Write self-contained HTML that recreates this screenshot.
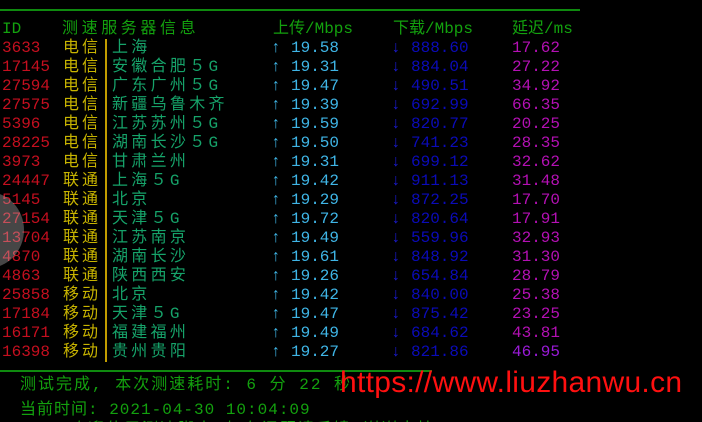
<!DOCTYPE html>
<html><head><meta charset="utf-8"><style>
html,body{margin:0;padding:0;background:#000;width:702px;height:422px;overflow:hidden;position:relative}
body{font-family:"Liberation Mono","Noto Sans CJK SC",monospace;font-size:16px}
.r{position:absolute;left:0;height:19px;line-height:19px;white-space:pre;width:702px}
.r span{position:absolute;top:0}
.id{left:2px;color:#c50f1f}
.ca{left:63px;color:#c8b400;letter-spacing:3px}
.bar{left:105px;top:0!important;width:2px;height:19px;background:#c19c00}
.ci{left:112px;color:#16a36a;letter-spacing:3.3px}
.ua{left:271px;color:#3fb5e6}
.uv{left:291px;color:#3fb5e6}
.da{left:391px;color:#1a1ad0}
.dv{left:411px;color:#0b0bb8}
.lt{left:512px;color:#b410b4}
.h{color:#13a10e}
.line{position:absolute;height:2px;background:#0f8a0f;left:0}
</style></head><body>
<div class="line" style="top:9px;width:580px"></div>
<div class="r" style="top:20px"><span class="h" style="left:2px">ID</span><span class="h" style="left:62px;letter-spacing:3.6px">测速服务器信息</span><span class="h" style="left:273px">上传/Mbps</span><span class="h" style="left:393px">下载/Mbps</span><span class="h" style="left:512px">延迟/ms</span></div>
<div class="r" style="top:39px"><span class="id">3633</span><span class="ca">电信</span><span class="bar"></span><span class="ci">上海</span><span class="ua">↑</span><span class="uv">19.58</span><span class="da">↓</span><span class="dv">888.60</span><span class="lt">17.62</span></div>
<div class="r" style="top:58px"><span class="id">17145</span><span class="ca">电信</span><span class="bar"></span><span class="ci">安徽合肥５G</span><span class="ua">↑</span><span class="uv">19.31</span><span class="da">↓</span><span class="dv">884.04</span><span class="lt">27.22</span></div>
<div class="r" style="top:77px"><span class="id">27594</span><span class="ca">电信</span><span class="bar"></span><span class="ci">广东广州５G</span><span class="ua">↑</span><span class="uv">19.47</span><span class="da">↓</span><span class="dv">490.51</span><span class="lt">34.92</span></div>
<div class="r" style="top:96px"><span class="id">27575</span><span class="ca">电信</span><span class="bar"></span><span class="ci">新疆乌鲁木齐</span><span class="ua">↑</span><span class="uv">19.39</span><span class="da">↓</span><span class="dv">692.99</span><span class="lt">66.35</span></div>
<div class="r" style="top:115px"><span class="id">5396</span><span class="ca">电信</span><span class="bar"></span><span class="ci">江苏苏州５G</span><span class="ua">↑</span><span class="uv">19.59</span><span class="da">↓</span><span class="dv">820.77</span><span class="lt">20.25</span></div>
<div class="r" style="top:134px"><span class="id">28225</span><span class="ca">电信</span><span class="bar"></span><span class="ci">湖南长沙５G</span><span class="ua">↑</span><span class="uv">19.50</span><span class="da">↓</span><span class="dv">741.23</span><span class="lt">28.35</span></div>
<div class="r" style="top:153px"><span class="id">3973</span><span class="ca">电信</span><span class="bar"></span><span class="ci">甘肃兰州</span><span class="ua">↑</span><span class="uv">19.31</span><span class="da">↓</span><span class="dv">699.12</span><span class="lt">32.62</span></div>
<div class="r" style="top:172px"><span class="id">24447</span><span class="ca">联通</span><span class="bar"></span><span class="ci">上海５G</span><span class="ua">↑</span><span class="uv">19.42</span><span class="da">↓</span><span class="dv">911.13</span><span class="lt">31.48</span></div>
<div class="r" style="top:191px"><span class="id">5145</span><span class="ca">联通</span><span class="bar"></span><span class="ci">北京</span><span class="ua">↑</span><span class="uv">19.29</span><span class="da">↓</span><span class="dv">872.25</span><span class="lt">17.70</span></div>
<div class="r" style="top:210px"><span class="id">27154</span><span class="ca">联通</span><span class="bar"></span><span class="ci">天津５G</span><span class="ua">↑</span><span class="uv">19.72</span><span class="da">↓</span><span class="dv">820.64</span><span class="lt">17.91</span></div>
<div class="r" style="top:229px"><span class="id">13704</span><span class="ca">联通</span><span class="bar"></span><span class="ci">江苏南京</span><span class="ua">↑</span><span class="uv">19.49</span><span class="da">↓</span><span class="dv">559.96</span><span class="lt">32.93</span></div>
<div class="r" style="top:248px"><span class="id">4870</span><span class="ca">联通</span><span class="bar"></span><span class="ci">湖南长沙</span><span class="ua">↑</span><span class="uv">19.61</span><span class="da">↓</span><span class="dv">848.92</span><span class="lt">31.30</span></div>
<div class="r" style="top:267px"><span class="id">4863</span><span class="ca">联通</span><span class="bar"></span><span class="ci">陕西西安</span><span class="ua">↑</span><span class="uv">19.26</span><span class="da">↓</span><span class="dv">654.84</span><span class="lt">28.79</span></div>
<div class="r" style="top:286px"><span class="id">25858</span><span class="ca">移动</span><span class="bar"></span><span class="ci">北京</span><span class="ua">↑</span><span class="uv">19.42</span><span class="da">↓</span><span class="dv">840.00</span><span class="lt">25.38</span></div>
<div class="r" style="top:305px"><span class="id">17184</span><span class="ca">移动</span><span class="bar"></span><span class="ci">天津５G</span><span class="ua">↑</span><span class="uv">19.47</span><span class="da">↓</span><span class="dv">875.42</span><span class="lt">23.25</span></div>
<div class="r" style="top:324px"><span class="id">16171</span><span class="ca">移动</span><span class="bar"></span><span class="ci">福建福州</span><span class="ua">↑</span><span class="uv">19.49</span><span class="da">↓</span><span class="dv">684.62</span><span class="lt">43.81</span></div>
<div class="r" style="top:343px"><span class="id">16398</span><span class="ca">移动</span><span class="bar"></span><span class="ci">贵州贵阳</span><span class="ua">↑</span><span class="uv">19.27</span><span class="da">↓</span><span class="dv">821.86</span><span class="lt" style="color:#9a1ad8">46.95</span></div>
<div class="line" style="top:370px;width:432px"></div>
<div class="r" style="top:376px"><span class="h" style="left:20px;letter-spacing:2px">测试完成, 本次测速耗时: 6 分 22 秒</span></div>
<div class="r" style="top:401px"><span class="h" style="left:20px;letter-spacing:1px">当前时间: 2021-04-30 10:04:09</span></div>
<div class="r" style="top:421px"><span class="h" style="left:70px;letter-spacing:2px">欢迎使用测速脚本,如有问题请反馈,谢谢支持</span></div>
<div style="position:absolute;left:340px;top:366px;font-family:'Liberation Sans',sans-serif;font-size:30px;color:#ff1010;line-height:34px;white-space:pre;letter-spacing:0.3px">https://www.liuzhanwu.cn</div>
<div style="position:absolute;left:-48px;top:192px;width:72px;height:76px;border-radius:50%;background:rgba(200,200,200,0.35)"></div>
</body></html>
